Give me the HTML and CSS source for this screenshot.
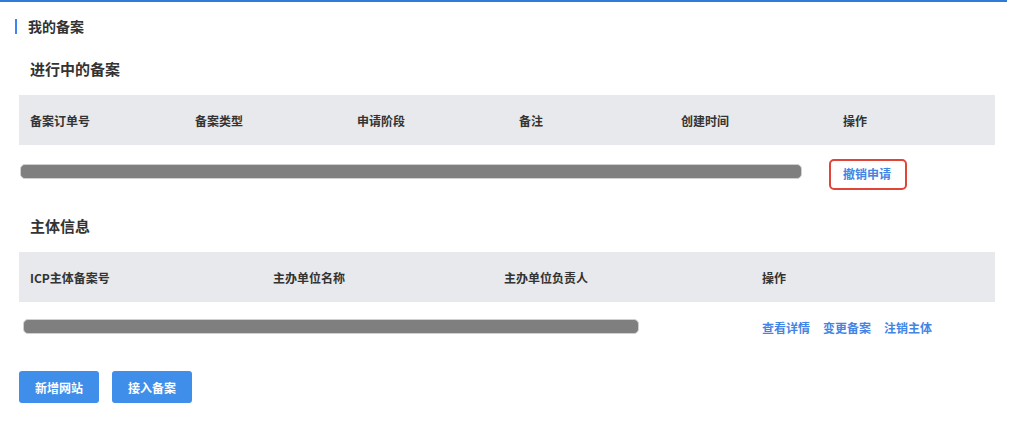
FILE: index.html
```html
<!DOCTYPE html>
<html lang="zh">
<head>
<meta charset="utf-8">
<link rel="stylesheet" href="styles.css">
</head>
<body>
<div class="page">
  <div class="page-title"><span class="bar"></span><span class="title-text">我的备案</span></div>

  <h2 class="section-title sec1">进行中的备案</h2>
  <div class="table t1">
    <div class="thead">
      <div class="th">备案订单号</div>
      <div class="th">备案类型</div>
      <div class="th">申请阶段</div>
      <div class="th">备注</div>
      <div class="th">创建时间</div>
      <div class="th">操作</div>
    </div>
    <div class="trow r1">
      <div class="redact redact1"></div>
      <div class="ops ops1"><a class="link boxed">撤销申请</a></div>
    </div>
  </div>

  <h2 class="section-title sec2">主体信息</h2>
  <div class="table t2">
    <div class="thead thead2">
      <div class="th">ICP主体备案号</div>
      <div class="th">主办单位名称</div>
      <div class="th">主办单位负责人</div>
      <div class="th">操作</div>
    </div>
    <div class="trow r2">
      <div class="redact redact2"></div>
      <div class="ops ops2">
        <a class="link">查看详情</a>
        <a class="link">变更备案</a>
        <a class="link">注销主体</a>
      </div>
    </div>
  </div>

  <div class="actions">
    <button class="btn">新增网站</button>
    <button class="btn">接入备案</button>
  </div>
</div>
</body>
</html>
```

FILE: styles.css
```css
* { box-sizing: border-box; }
html, body { margin: 0; padding: 0; background: #fff; }
body {
  font-family: "Noto Sans CJK SC", "Noto Sans", "Liberation Sans", sans-serif;
  color: #333;
  width: 1009px;
  height: 424px;
  overflow: hidden;
}
.page {
  border-top: 2px solid #2f7bd6;
  width: 1007px;
  padding: 0 14px 0 19px;
}
.page-title {
  display: flex;
  align-items: center;
  height: 15px;
  margin-top: 17px;
  margin-left: -4px;
}
.bar {
  width: 2px;
  height: 15px;
  background: #3b86ef;
  margin-right: 11px;
}
.title-text {
  font-size: 14px;
  font-weight: 600;
  line-height: 15px;
  color: #333;
}
.section-title {
  margin: 0;
  font-size: 15px;
  font-weight: 600;
  line-height: 20px;
  padding-left: 11px;
  color: #333;
}
.sec1 { margin-top: 25px; }
.sec2 { margin-top: 19px; }
.table { width: 976px; }
.t1 { margin-top: 16px; }
.t2 { margin-top: 16px; }
.thead {
  display: grid;
  grid-template-columns: 165px repeat(5, 162px) 1fr;
  height: 50px;
  align-items: center;
  background: #e8e9ec;
  padding-top: 1px;
}
.thead2 {
  grid-template-columns: 243px 231px 258px 1fr;
}
.th {
  padding-left: 11px;
  font-size: 12px;
  font-weight: 700;
  color: #333;
  line-height: 16px;
}
.trow {
  display: flex;
  align-items: center;
}
.r1 { height: 52px; }
.r2 { height: 50px; }
.redact {
  height: 15px;
  background: #7f7f7f;
  border: 1px solid #d0d0d0;
  border-radius: 5px;
}
.redact1 { width: 782px; margin-left: 1px; }
.redact2 { width: 616px; margin-left: 4px; margin-top: -2px; }
.ops { display: flex; align-items: center; }
.ops1 { margin-left: 27px; margin-top: 7px; }
.ops2 { margin-left: 123px; gap: 13px; margin-top: 1px; }
.link {
  font-size: 12px;
  color: #4285e4;
  font-weight: 600;
  line-height: 16px;
  cursor: pointer;
}
.boxed {
  display: inline-block;
  padding: 5px 12px 6px 12px;
  border: 2px solid #e04538;
  border-radius: 5px;
  width: 78px;
  height: 31px;
}
.actions {
  display: flex;
  gap: 13px;
  margin-top: 19px;
}
.btn {
  width: 80px;
  height: 32px;
  border: none;
  border-radius: 3px;
  background: #3f8eea;
  color: #fff;
  font-family: inherit;
  font-size: 12px;
  font-weight: 700;
  padding: 0;
}
```
